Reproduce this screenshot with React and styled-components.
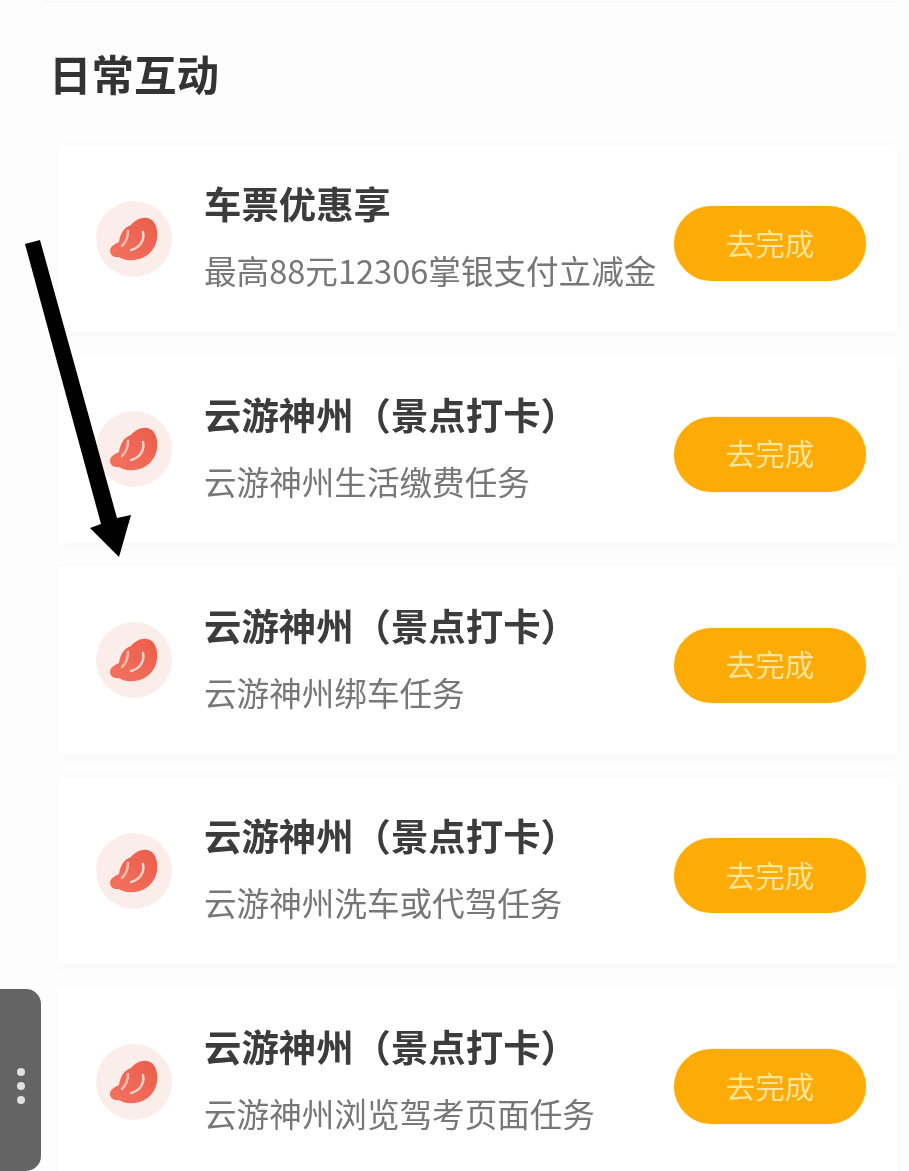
import React from 'react';
import styled, { createGlobalStyle } from 'styled-components';

const GlobalStyle = createGlobalStyle`
  html, body {
    margin: 0;
    padding: 0;
    background: #fdfdfd;
  }
`;

const Page = styled.div`
  position: relative;
  width: 909px;
  height: 1171px;
  overflow: hidden;
  background: #fdfdfd;
  font-family: "Noto Sans CJK SC", "Liberation Sans", sans-serif;
  filter: blur(0.4px);
`;

const TopSliver = styled.div`
  height: 3px;
  margin: 0 10px 0 44px;
  background: #f9f9f9;
`;

const Heading = styled.h2`
  margin: 0;
  padding: 41px 0 0 49px;
  height: 102px;
  box-sizing: content-box;
  font-size: 42.5px;
  line-height: 58px;
  font-weight: 700;
  color: #333;
`;

const List = styled.div`
  display: flex;
  flex-direction: column;
  gap: 23.75px;
  margin: -1px 12px 0 58px;
`;

const Card = styled.div`
  display: flex;
  align-items: center;
  height: 187px;
  flex: none;
  padding: 0 31px 0 38px;
  background: #fff;
  box-shadow: 0 -2px 6px rgba(0, 0, 0, 0.012), 0 4px 8px rgba(0, 0, 0, 0.02);
`;

const IconCircle = styled.div`
  display: flex;
  align-items: center;
  justify-content: center;
  width: 76px;
  height: 76px;
  flex: none;
  border-radius: 50%;
  background: #fbeeea;
  filter: blur(0.6px);
`;

const Info = styled.div`
  flex: 1;
  min-width: 0;
  margin-left: 32px;
  display: flex;
  flex-direction: column;
  gap: 17px;
  margin-top: -4px;
`;

const Title = styled.div`
  font-size: 37.4px;
  line-height: 50px;
  font-weight: 700;
  color: #3c3c3c;
  white-space: nowrap;
`;

const Sub = styled.div`
  font-size: 32.6px;
  line-height: 50px;
  color: #777;
  white-space: nowrap;
`;

const Action = styled.button`
  width: 192px;
  height: 75px;
  flex: none;
  margin-top: 10px;
  border: none;
  padding: 0 0 4px;
  border-radius: 38px;
  background: #fdab06;
  box-shadow: 0 0 2px #fde08a;
  color: #fde59b;
  font-family: inherit;
  font-size: 29.5px;
  font-weight: 400;
`;

const Arrow = styled.svg`
  position: absolute;
  left: 0;
  top: 0;
  pointer-events: none;
`;

const SideHandle = styled.div`
  position: absolute;
  left: 0;
  top: 989px;
  width: 41px;
  height: 182px;
  display: flex;
  flex-direction: column;
  align-items: center;
  justify-content: center;
  gap: 6px;
  padding-top: 12px;
  box-sizing: border-box;
  background: #646464;
  border-radius: 0 15px 15px 0;
`;

const Dot = styled.span`
  width: 8px;
  height: 8px;
  border-radius: 50%;
  background: #e0e0e0;
`;

const tasks = [
  { title: '车票优惠享', sub: '最高88元12306掌银支付立减金' },
  { title: '云游神州（景点打卡）', sub: '云游神州生活缴费任务' },
  { title: '云游神州（景点打卡）', sub: '云游神州绑车任务' },
  { title: '云游神州（景点打卡）', sub: '云游神州洗车或代驾任务' },
  { title: '云游神州（景点打卡）', sub: '云游神州浏览驾考页面任务' },
];

const BeanIcon = () => (
  <svg width="50" height="46" viewBox="0 0 50 46" fill="none">
    <defs>
      <linearGradient id="bean" x1="0" y1="1" x2="1" y2="0">
        <stop offset="0" stopColor="#f27360" />
        <stop offset="1" stopColor="#ec5c4a" />
      </linearGradient>
    </defs>
    <path
      d="M1 35 C1 30 6 28 10 26 C11 18 15 11 22 9 C27 3 35 0 41 3 C47 6 49 14 48 22 C47 33 38 43 25 44 C18 45 13 43 10 41 C5 42 1 39 1 35 Z"
      fill="url(#bean)"
    />
    <path d="M19 15 C19 21 17 26 13 30" stroke="#fbbcae" strokeWidth="2.5" strokeLinecap="round" />
    <path d="M34 16 C36 25 30 32 22 34" stroke="#fcd6cc" strokeWidth="2.5" strokeLinecap="round" />
  </svg>
);

const App = () => {
  return (
    <Page>
      <GlobalStyle />
      <TopSliver />
      <Heading>日常互动</Heading>
      <List>
        {tasks.map((task) => (
          <Card key={task.sub}>
            <IconCircle>
              <BeanIcon />
            </IconCircle>
            <Info>
              <Title>{task.title}</Title>
              <Sub>{task.sub}</Sub>
            </Info>
            <Action>去完成</Action>
          </Card>
        ))}
      </List>
      <Arrow width="140" height="570" viewBox="0 0 140 570">
        <path d="M25 244 L40 240 L117 518 L131 515 L119 557 L90 528 L101 524 Z" fill="#000" />
      </Arrow>
      <SideHandle>
        <Dot />
        <Dot />
        <Dot />
      </SideHandle>
    </Page>
  );
};

export default App;
